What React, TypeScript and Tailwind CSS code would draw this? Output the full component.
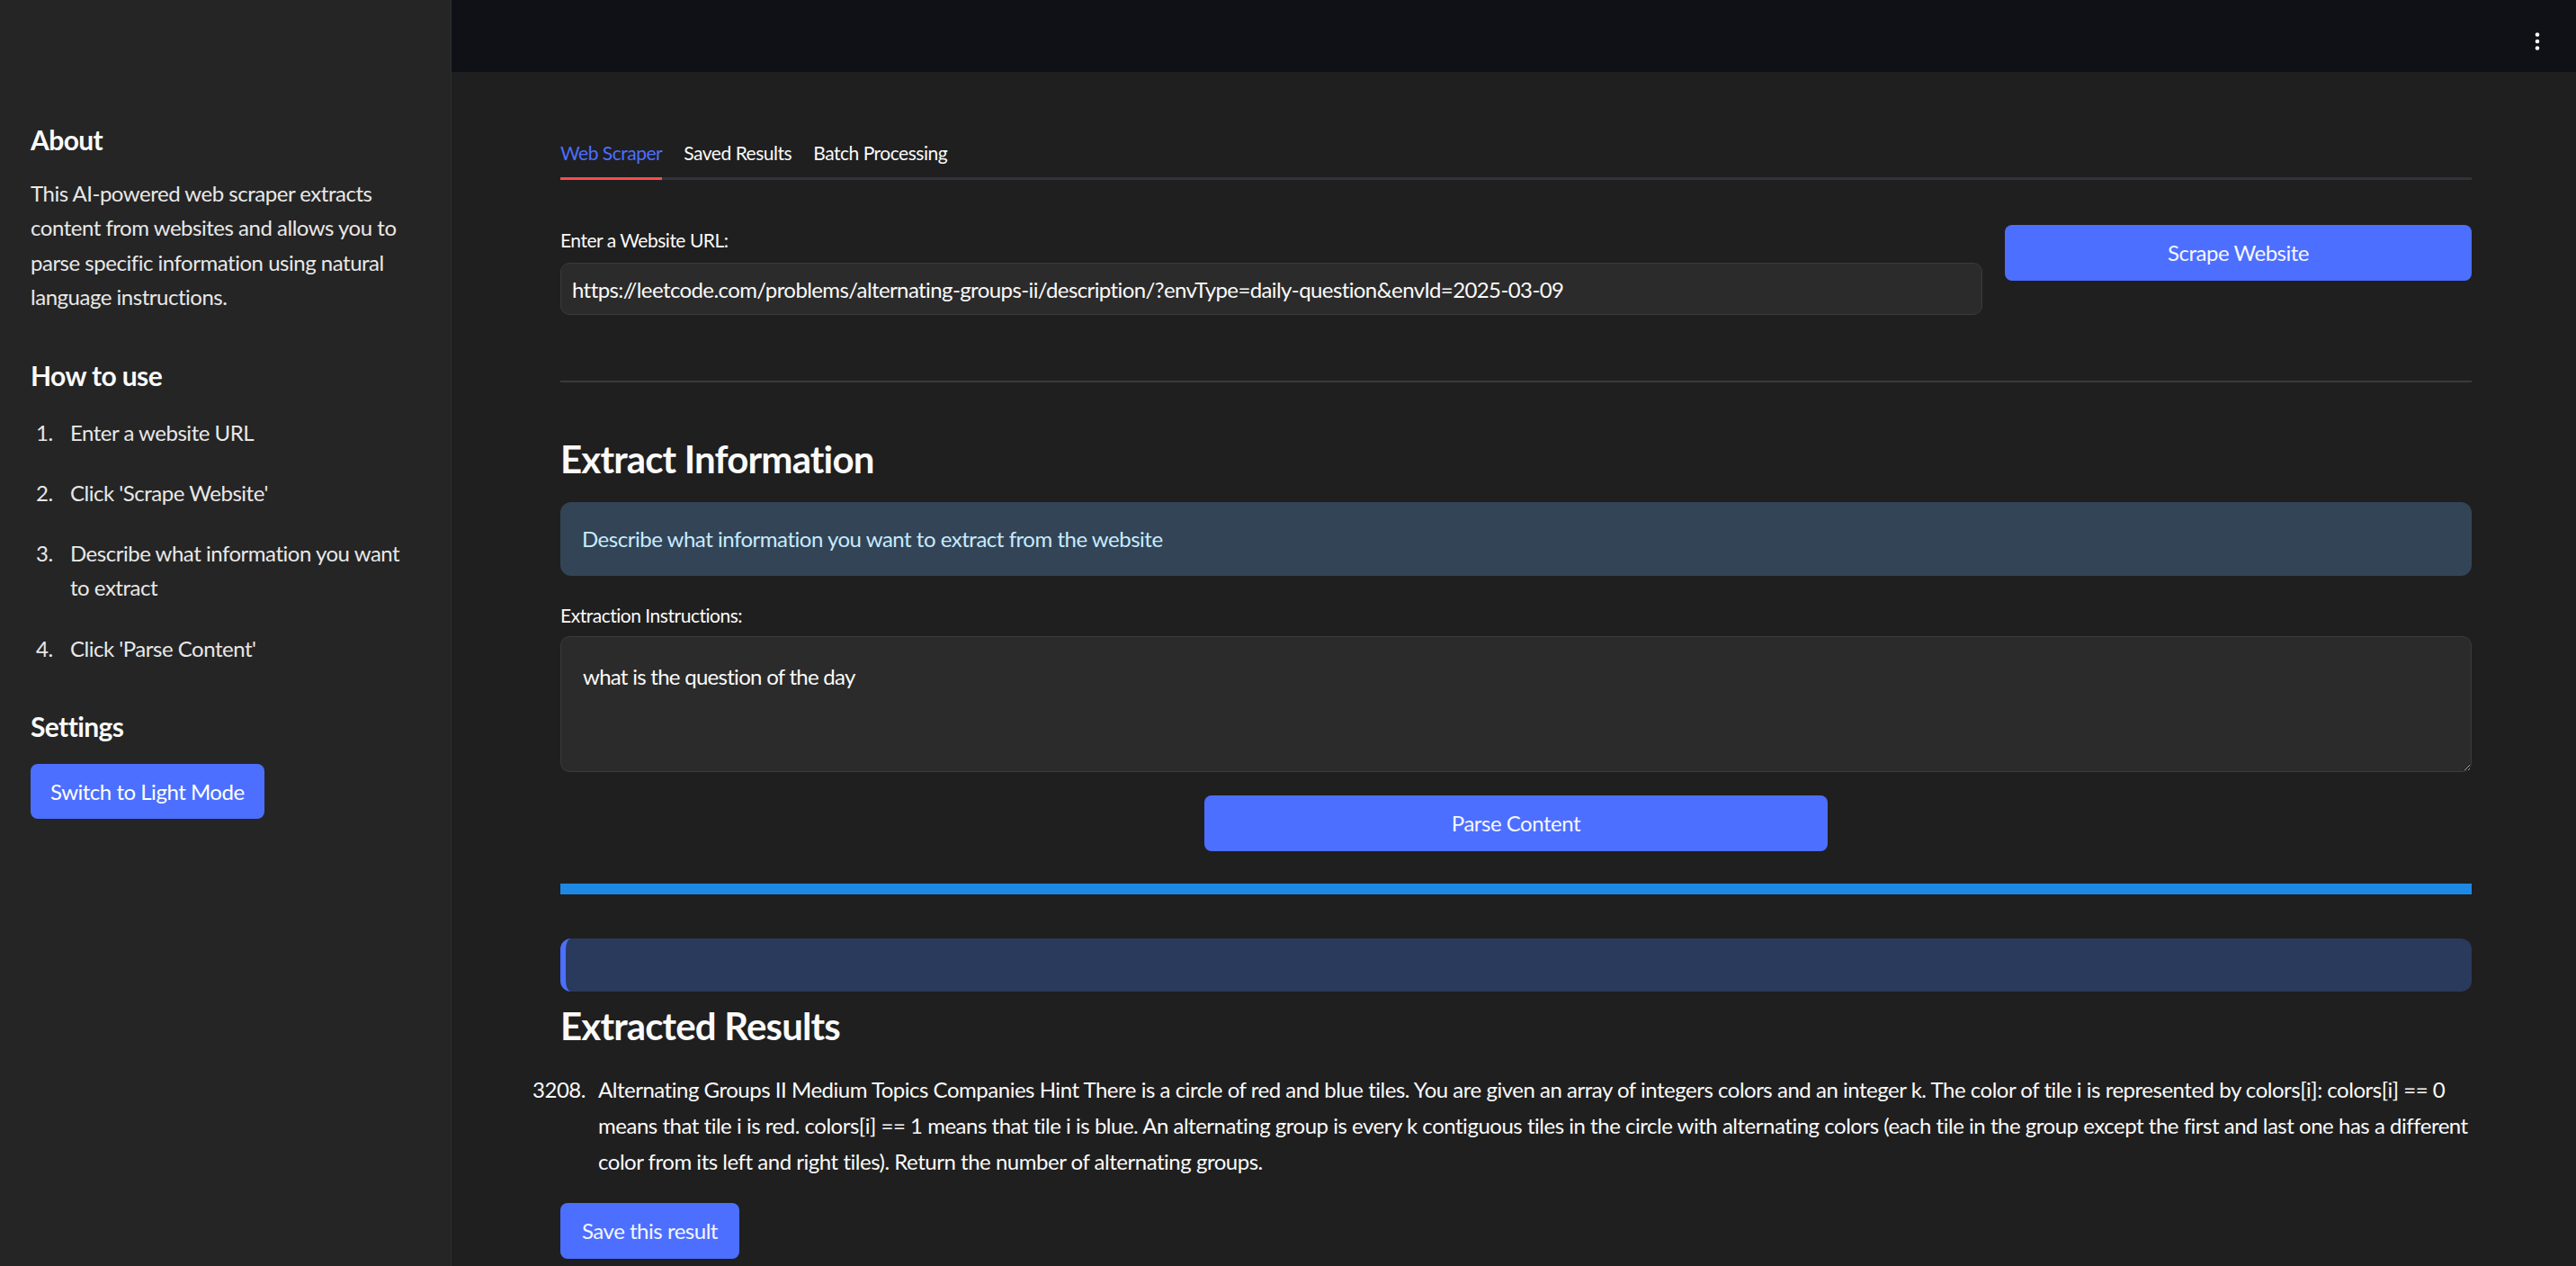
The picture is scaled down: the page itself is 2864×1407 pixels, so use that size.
import React from 'react';

const steps: string[][] = [
    ['Enter a website URL'],
    ["Click 'Scrape Website'"],
    ['Describe what information you want', 'to extract'],
    ["Click 'Parse Content'"],
];

const tabs = ['Web Scraper', 'Saved Results', 'Batch Processing'];

const Sidebar: React.FC = () => (
    <aside className="w-[502px] shrink-0 h-full bg-[#252525] border-r border-[#2e2e2e] pl-[34px] pr-[30px] pt-[137px] text-[#fafafa]">
        <h2 className="text-[30px] leading-[36px] font-bold tracking-[-0.02em]">About</h2>
        <p className="mt-[23px] text-[24px] leading-[38.4px] text-[#e8e8e8]">
            This AI-powered web scraper extracts<br />
            content from websites and allows you to<br />
            parse specific information using natural<br />
            language instructions.
        </p>

        <h2 className="mt-[49px] text-[30px] leading-[36px] font-bold tracking-[-0.02em]">How to use</h2>
        <ol className="mt-[27px] text-[24px] leading-[38.4px] text-[#e8e8e8]">
            {steps.map((lines, i) => (
                <li key={i} className="flex mb-[28.8px]">
                    <span className="w-[44px] shrink-0 pl-[6px]">{i + 1}.</span>
                    <span>
                        {lines.map((l, j) => (
                            <span key={j} className="block">{l}</span>
                        ))}
                    </span>
                </li>
            ))}
        </ol>

        <h2 className="mt-[49px] text-[30px] leading-[36px] font-bold tracking-[-0.02em]">Settings</h2>
        <button className="mt-[24px] h-[61px] px-[22px] rounded-[8px] bg-[#4c6fff] text-[24px] text-white">
            Switch to Light Mode
        </button>
    </aside>
);

const PrimaryButton: React.FC<{ label: string; className?: string }> = ({ label, className = '' }) => (
    <button className={`h-[62px] rounded-[8px] bg-[#4c6fff] text-[24px] text-[#f4f6ff] ${className}`}>
        {label}
    </button>
);

export default function App() {
    return (
        <div className="flex h-screen w-full overflow-hidden bg-[#1f1f1f] font-[Lato,sans-serif] tracking-[-0.03em]">
            <Sidebar />

            <div className="flex-1 flex flex-col min-w-0">
                <header className="h-[80px] shrink-0 bg-[#0f1116] flex justify-end pt-[36px] pr-[40px]">
                    <svg width="6" height="20" viewBox="0 0 6 20" fill="#ffffff">
                        <circle cx="3" cy="2.5" r="2.3" />
                        <circle cx="3" cy="10" r="2.3" />
                        <circle cx="3" cy="17.5" r="2.3" />
                    </svg>
                </header>

                <main className="pl-[121px] pr-[116px] pt-[73px] text-[#fafafa]">
                    {/* tabs */}
                    <div className="flex gap-[24px] border-b-[3px] border-[#31333a]">
                        {tabs.map((t, i) => (
                            <div
                                key={t}
                                className={`relative pb-[11px] text-[21px] leading-[33px] ${i === 0 ? 'text-[#4c6fff]' : 'text-[#fafafa]'}`}
                            >
                                {t}
                                {i === 0 && <div className="absolute left-0 right-0 -bottom-[3px] h-[3px] bg-[#ff4b4b]" />}
                            </div>
                        ))}
                    </div>

                    {/* url row */}
                    <div className="mt-[50px] flex gap-[25px]">
                        <div className="flex-1 min-w-0">
                            <label className="block text-[21px] leading-[34px]">Enter a Website URL:</label>
                            <input
                                readOnly
                                value="https://leetcode.com/problems/alternating-groups-ii/description/?envType=daily-question&envId=2025-03-09"
                                className="mt-[8px] block w-full h-[58px] rounded-[10px] bg-[#2b2b2b] border border-[#3a3a40] px-[12px] text-[24px] tracking-[-0.025em] text-[#fafafa] outline-none"
                            />
                        </div>
                        <div className="w-[519px] shrink-0">
                            <PrimaryButton label="Scrape Website" className="w-full" />
                        </div>
                    </div>

                    <div className="mt-[73px] h-[2px] bg-[#3a3a3a]" />

                    <h3 className="mt-[60px] text-[42px] leading-[50px] font-bold tracking-[-0.02em]">Extract Information</h3>

                    <div className="mt-[23px] rounded-[12px] bg-[#334456] px-[24px] py-[22px] text-[24px] leading-[38.4px] text-[#c7ebff]">
                        Describe what information you want to extract from the website
                    </div>

                    <label className="mt-[27px] block text-[21px] leading-[34px]">Extraction Instructions:</label>
                    <textarea
                        readOnly
                        defaultValue="what is the question of the day"
                        className="mt-[6px] block w-full h-[151px] rounded-[10px] bg-[#2b2b2b] border border-[#3a3a40] pl-[24px] pr-[16px] pt-[25px] text-[24px] leading-[38.4px] tracking-[-0.03em] text-[#fafafa] outline-none resize-y"
                    />

                    <div className="mt-[26px] grid grid-cols-3 gap-[24px]">
                        <div />
                        <PrimaryButton label="Parse Content" className="w-full" />
                        <div />
                    </div>

                    <div className="mt-[36px] h-[12px] bg-[#1e88e5]" />

                    <div className="mt-[49px] h-[59px] rounded-[12px] border-l-[6px] border-[#4c6fff] bg-[#2a3a5c]" />

                    <h3 className="mt-[13px] text-[42px] leading-[50px] font-bold tracking-[-0.02em]">Extracted Results</h3>

                    <div className="mt-[26px] flex text-[24px] leading-[40px] text-[#fafafa]">
                        <span className="-ml-[31px] w-[73px] shrink-0 pr-[20px] text-right">3208.</span>
                        <p>
                            Alternating Groups II Medium Topics Companies Hint There is a circle of red and blue tiles. You are given an array of integers colors and an integer k. The color of tile i is represented by colors[i]: colors[i] == 0<br />
                            means that tile i is red. colors[i] == 1 means that tile i is blue. An alternating group is every k contiguous tiles in the circle with alternating colors (each tile in the group except the first and last one has a different<br />
                            color from its left and right tiles). Return the number of alternating groups.
                        </p>
                    </div>

                    <PrimaryButton label="Save this result" className="mt-[26px] px-[24px]" />
                </main>
            </div>
        </div>
    );
}
